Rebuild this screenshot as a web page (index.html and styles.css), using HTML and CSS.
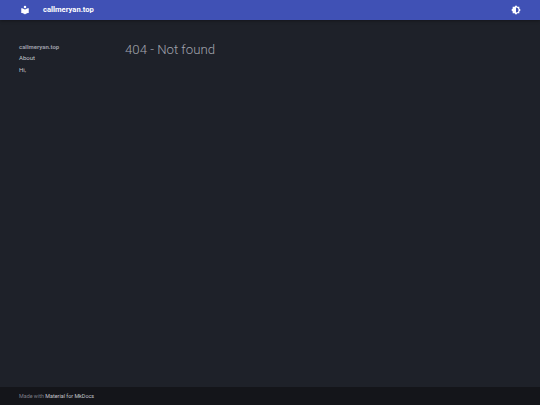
FILE: index.html
```html
<!DOCTYPE html>
<html lang="en">
<head>
<meta charset="utf-8">
<title>callmeryan.top</title>
<link rel="stylesheet" href="styles.css">
</head>
<body>
<header class="header">
  <svg class="icon logo" viewBox="0 0 24 24" aria-hidden="true"><path fill="currentColor" d="M12 8a3 3 0 0 0 3-3 3 3 0 0 0-3-3 3 3 0 0 0-3 3 3 3 0 0 0 3 3m0 3.54C9.64 9.35 6.5 8 3 8v11c3.5 0 6.64 1.35 9 3.54 2.36-2.19 5.5-3.54 9-3.54V8c-3.5 0-6.64 1.35-9 3.54Z"/></svg>
  <span class="site-title">callmeryan.top</span>
  <svg class="icon toggle" viewBox="0 0 24 24" aria-hidden="true"><path fill="currentColor" d="M12 18V6a6 6 0 0 1 6 6 6 6 0 0 1-6 6m8-2.69L23.31 12 20 8.69V4h-4.69L12 .69 8.69 4H4v4.69L.69 12 4 15.31V20h4.69L12 23.31 15.31 20H20v-4.69Z"/></svg>
</header>
<div class="main">
  <nav class="sidebar">
    <div class="nav-title">callmeryan.top</div>
    <a class="nav-link">About</a>
    <a class="nav-link">Hi,</a>
  </nav>
  <main class="content">
    <h1>404 - Not found</h1>
  </main>
</div>
<footer class="footer">
  <span class="made">Made with</span> <a class="credit">Material for MkDocs</a>
</footer>
</body>
</html>
```
FILE: styles.css
```css
* { box-sizing: border-box; }
html, body { height: 100%; }
body {
  margin: 0;
  display: flex;
  flex-direction: column;
  min-height: 405px;
  height: 405px;
  overflow: hidden;
  background: #1e2129;
  font-family: Roboto, "Liberation Sans", sans-serif;
  color: #c7c9d0;
}
.header {
  flex: none;
  height: 20px;
  display: flex;
  align-items: center;
  padding: 0 19px 0 20px;
  background: #4051b5;
  color: #fff;
  box-shadow: 0 1px 3px rgba(0, 0, 0, 0.35);
}
.icon { display: block; flex: none; width: 10px; height: 10px; }
.site-title {
  margin-left: 13px;
  font-size: 7.6px;
  font-weight: 700;
  line-height: 20px;
  flex: 1;
}
.main { flex: 1; display: flex; min-height: 0; }
.sidebar {
  flex: none;
  width: 125px;
  padding: 21px 0 0 19px;
  font-size: 6px;
  line-height: 11.3px;
}
.nav-title { font-weight: 700; color: #9a9ca6; }
.nav-link { display: block; color: #c4c5cc; }
.content { flex: 1; padding: 20px 0 0; }
h1 {
  margin: 0;
  font-size: 13.2px;
  font-weight: 300;
  line-height: 19px;
  color: #a2a4ae;
}
.footer {
  flex: none;
  height: 18px;
  padding-left: 19px;
  background: #14151a;
  font-size: 5.4px;
  line-height: 18px;
  color: #7c7e88;
}
.credit { color: #c4c5cc; }
```
